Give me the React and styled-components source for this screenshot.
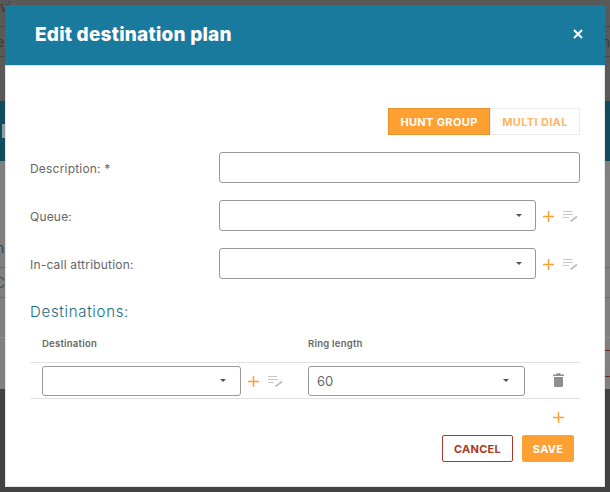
import React from "react";
import styled, { createGlobalStyle } from "styled-components";

const Global = createGlobalStyle`
  html, body { margin: 0; padding: 0; height: 100%; overflow: hidden; }
  body { background: #424242; font-family: Inter, "Open Sans", sans-serif; }
  * { box-sizing: border-box; }
`;

const Page = styled.div`
  position: relative;
  width: 610px;
  height: 492px;
  overflow: hidden;
`;

// the dimmed page behind the modal, only its edges show
const Backdrop = styled.div`
  display: flex;
  flex-direction: column;
`;

const BgRow = styled.div`
  height: ${(p) => p.$h}px;
  background: ${(p) => p.$bg || "#808080"};
  border-bottom: 1px solid ${(p) => p.$line || "transparent"};
  ${(p) => p.$red && "border-image: linear-gradient(to right, #808080 50%, #6e2b24 50%) 1;"}
  display: flex;
  justify-content: space-between;
  align-items: ${(p) => p.$align || "center"};
  font-size: 14px;
  line-height: 14px;
  color: ${(p) => p.$color || "#3a3a3a"};
  overflow: hidden;
`;

const BgText = styled.span`
  margin-left: ${(p) => p.$ml || 0}px;
`;

const BgChip = styled.span`
  width: 5px;
  height: 14px;
  margin-left: 2px;
  background: #8f9a9e;
`;

const Modal = styled.div`
  position: absolute;
  top: 5px;
  left: 5px;
  width: 600px;
  height: 482px;
  background: #fff;
  display: flex;
  flex-direction: column;
`;

const Header = styled.header`
  height: 60px;
  flex: none;
  background: #1a7a9e;
  color: #fff;
  display: flex;
  align-items: center;
  justify-content: space-between;
  padding: 0 22px 2px 30px;
`;

const Title = styled.h1`
  margin: 0;
  font-size: 19px;
  font-weight: 800;
  letter-spacing: 0.22px;
`;

const Body = styled.div`
  flex: 1;
  padding: 42px 24px 0;
  display: flex;
  flex-direction: column;
  border: 1px solid #e6e6e6;
  border-top-color: #dcdcdc;
`;

const Tabs = styled.div`
  display: flex;
  justify-content: flex-end;
  margin-bottom: 17px;
`;

const Tab = styled.div`
  height: 27px;
  display: flex;
  align-items: center;
  justify-content: center;
  font-size: 11px;
  font-weight: 700;
  letter-spacing: 0.35px;
  width: ${(p) => (p.$active ? "102px" : "90px")};
  background: ${(p) => (p.$active ? "#ffa033" : "#fff")};
  color: ${(p) => (p.$active ? "#fff" : "#ffb566")};
  border: 1px solid ${(p) => (p.$active ? "#e8922c" : "#ececec")};
`;

const Row = styled.div`
  display: flex;
  align-items: center;
  height: 31px;
  margin-bottom: 17px;
`;

const Label = styled.label`
  width: 189px;
  padding-top: 2px;
  font-size: 12px;
  letter-spacing: 0.2px;
  color: #666;
`;

const Field = styled.div`
  height: ${(p) => p.$h || 31}px;
  width: ${(p) => p.$w}px;
  flex: none;
  border: 1px solid #999;
  border-radius: 3px;
  display: flex;
  align-items: center;
  justify-content: space-between;
  padding: 0 ${(p) => p.$pr || 13}px 0 8px;
  font-size: 13px;
  color: #666;
`;

const Caret = styled.span`
  width: 0;
  height: 0;
  border-left: 3.5px solid transparent;
  border-right: 3.5px solid transparent;
  border-top: 3.5px solid #555;
`;

const Section = styled.h2`
  margin: 0;
  height: 32px;
  line-height: 32px;
  font-size: 15px;
  font-weight: 300;
  letter-spacing: 0.7px;
  color: #1b6a80;
`;

const Heads = styled.div`
  display: grid;
  grid-template-columns: 266px auto;
  padding-left: 12px;
  height: 35px;
  line-height: 32px;
  font-size: 9.5px;
  font-weight: 600;
  letter-spacing: 0.25px;
  color: #666;
  border-bottom: 1px solid #e2e2e2;
`;

const DestRow = styled.div`
  display: grid;
  grid-template-columns: 266px 217px auto;
  align-items: center;
  height: 36px;
  padding-left: 12px;
  border-bottom: 1px solid #e2e2e2;
`;

const DestCell = styled.div`
  display: flex;
  align-items: center;
`;

const AddRow = styled.div`
  display: flex;
  align-items: center;
  justify-content: flex-end;
  height: 36px;
  padding: 0 16px 0 0;
`;

const Footer = styled.div`
  display: flex;
  justify-content: flex-end;
  gap: 9px;
  padding-right: 6px;
`;

const Button = styled.div`
  width: ${(p) => p.$w}px;
  height: 27px;
  display: flex;
  align-items: center;
  justify-content: center;
  font-size: 11px;
  font-weight: 700;
  letter-spacing: 0.25px;
  border-radius: 2px;
  color: ${(p) => (p.$primary ? "#fff" : "#a83a28")};
  background: ${(p) => (p.$primary ? "#ffa033" : "#fff")};
  border: 1px solid ${(p) => (p.$primary ? "#ffa033" : "#a83a28")};
`;

const PlusSvg = styled.svg`
  flex: none;
  margin-left: ${(p) => p.$ml || 0}px;
  margin-top: ${(p) => p.$mt || 0}px;
`;

const EditSvg = styled.svg`
  flex: none;
  margin: 2px 0 0 9px;
`;

const TrashSvg = styled.svg`
  margin-left: 28px;
  margin-bottom: 1px;
`;

const CloseIcon = () => (
  <svg width="10" height="10" viewBox="0 0 10 10">
    <path d="M1 1l8 8M9 1l-8 8" stroke="#fff" strokeWidth="2" fill="none" />
  </svg>
);

const PlusIcon = (props) => (
  <PlusSvg width="11" height="11" viewBox="0 0 11 11" {...props}>
    <path d="M5.5 0v11M0 5.5h11" stroke="#ffa033" strokeWidth="1.5" fill="none" />
  </PlusSvg>
);

const EditList = () => (
  <EditSvg width="15" height="11" viewBox="0 0 15 11">
    <path d="M0 .5h9M0 3.5h10M0 6.5h6" stroke="#c6c6c6" strokeWidth="1" fill="none" />
    <path d="M7.5 10.5l6.5-5" stroke="#bdbdbd" strokeWidth="1.8" fill="none" />
  </EditSvg>
);

const Actions = () => (
  <>
    <PlusIcon $ml={7} $mt={2} />
    <EditList />
  </>
);

const Trash = () => (
  <TrashSvg width="11" height="14" viewBox="0 0 11 14">
    <path d="M0 1.5h11v1.6H0zM3.5 .3h4v1.4h-4zM1 4h9v8.8a1.2 1.2 0 0 1-1.2 1.2H2.2A1.2 1.2 0 0 1 1 12.8z" fill="#8f8f8f" />
  </TrashSvg>
);

export default function App() {
  return (
    <Page>
      <Global />
      <Backdrop>
        <BgRow $h={27} $bg="#595959" $line="#474747" $align="flex-start"><BgText>vi</BgText></BgRow>
        <BgRow $h={30} $bg="#595959" $line="#474747"><BgText $ml={-4}>e</BgText><BgText>n</BgText></BgRow>
        <BgRow $h={44} $bg="#595959" />
        <BgRow $h={60} $bg="#124b5d"><BgChip /></BgRow>
        <BgRow $h={95} $color="#1d4a5c" $align="flex-end"><BgText $ml={-4}>n</BgText></BgRow>
        <BgRow $h={12} $line="#6a6a6a" />
        <BgRow $h={30} $line="#6a6a6a" $color="#3f5058"><BgText $ml={-5}>C</BgText></BgRow>
        <BgRow $h={40} $line="#909090" />
        <BgRow $h={13} $red />
        <BgRow $h={26} $red />
        <BgRow $h={12} />
        <BgRow $h={102} $bg="#424242" />
      </Backdrop>
      <Modal>
        <Header>
          <Title>Edit destination plan</Title>
          <CloseIcon />
        </Header>
        <Body>
          <Tabs>
            <Tab $active>HUNT GROUP</Tab>
            <Tab>MULTI DIAL</Tab>
          </Tabs>
          <Row>
            <Label>Description: *</Label>
            <Field $w={361} />
          </Row>
          <Row>
            <Label>Queue:</Label>
            <Field $w={317} $pr={13}><span /><Caret /></Field>
            <Actions />
          </Row>
          <Row>
            <Label>In-call attribution:</Label>
            <Field $w={317} $pr={13}><span /><Caret /></Field>
            <Actions />
          </Row>
          <Section>Destinations:</Section>
          <Heads>
            <span>Destination</span>
            <span>Ring length</span>
          </Heads>
          <DestRow>
            <DestCell>
              <Field $w={199} $h={30} $pr={14}><span /><Caret /></Field>
              <Actions />
            </DestCell>
            <Field $w={217} $h={30} $pr={15}>60<Caret /></Field>
            <Trash />
          </DestRow>
          <AddRow><PlusIcon /></AddRow>
          <Footer>
            <Button $w={71}>CANCEL</Button>
            <Button $w={52} $primary>SAVE</Button>
          </Footer>
        </Body>
      </Modal>
    </Page>
  );
}
